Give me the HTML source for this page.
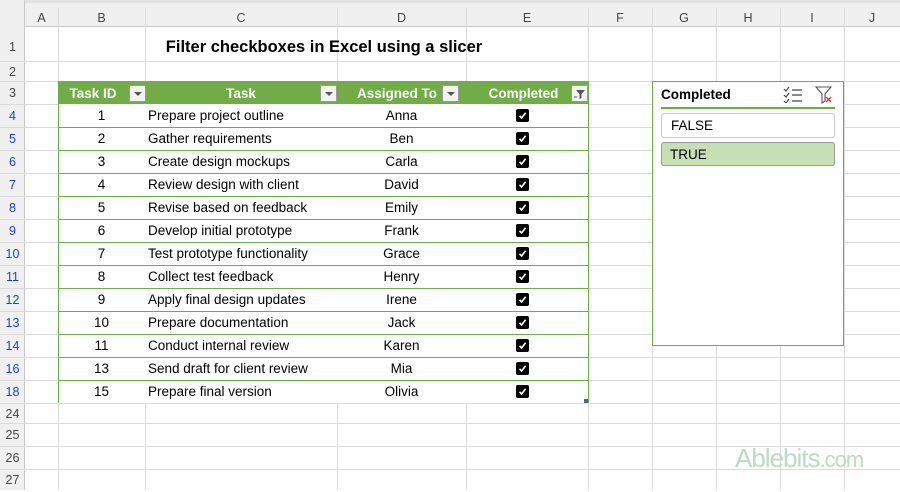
<!DOCTYPE html><html><head><style>
*{margin:0;padding:0;box-sizing:border-box}
body{width:900px;height:490px;background:#fff;position:relative;overflow:hidden;font-family:"Liberation Sans",Calibri,sans-serif;font-size:13.5px;color:#000}
.a{position:absolute}
.vl{position:absolute;width:1px;background:#dadada}
.hl{position:absolute;height:1px;background:#dadada}
.ch{position:absolute;top:8px;height:19px;text-align:center;color:#444;font-size:12.5px;line-height:20px}
.rh{position:absolute;left:0;width:25px;text-align:center;font-size:12.5px;color:#444}
.cell{position:absolute;height:23px;line-height:23px;white-space:nowrap}
.cb{position:absolute;width:13px;height:13px;background:#000;border-radius:2px}
.dd{position:absolute;width:17px;height:17px;background:#f3f3f3;border:1px solid #999;top:85px}
.dd:after{content:"";position:absolute;left:4px;top:6px;border-left:4px solid transparent;border-right:4px solid transparent;border-top:4px solid #555}
</style></head><body>
<div class="a" style="left:0;top:0;width:900px;height:27px;background:#f0f0f0;border-bottom:1px solid #c8c8c8"></div>
<div class="a" style="left:0;top:0;width:900px;height:3px;background:#e2e2e2"></div>
<div class="a" style="left:0;top:0;width:25px;height:490px;background:#f0f0f0;border-right:1px solid #c8c8c8"></div>
<div class="ch" style="left:25px;width:33px">A</div>
<div class="ch" style="left:58px;width:87px">B</div>
<div class="ch" style="left:145px;width:192px">C</div>
<div class="ch" style="left:337px;width:129px">D</div>
<div class="ch" style="left:466px;width:122px">E</div>
<div class="ch" style="left:588px;width:64px">F</div>
<div class="ch" style="left:652px;width:64px">G</div>
<div class="ch" style="left:716px;width:64px">H</div>
<div class="ch" style="left:780px;width:64px">I</div>
<div class="ch" style="left:844px;width:56px">J</div>
<div class="vl" style="left:58px;top:8px;height:482px"></div>
<div class="vl" style="left:145px;top:8px;height:482px"></div>
<div class="vl" style="left:337px;top:8px;height:482px"></div>
<div class="vl" style="left:466px;top:8px;height:482px"></div>
<div class="vl" style="left:588px;top:8px;height:482px"></div>
<div class="vl" style="left:652px;top:8px;height:482px"></div>
<div class="vl" style="left:716px;top:8px;height:482px"></div>
<div class="vl" style="left:780px;top:8px;height:482px"></div>
<div class="vl" style="left:844px;top:8px;height:482px"></div>
<div class="hl" style="left:0;top:61px;width:900px"></div>
<div class="hl" style="left:0;top:81px;width:900px"></div>
<div class="hl" style="left:0;top:104px;width:900px"></div>
<div class="hl" style="left:0;top:127px;width:900px"></div>
<div class="hl" style="left:0;top:150px;width:900px"></div>
<div class="hl" style="left:0;top:173px;width:900px"></div>
<div class="hl" style="left:0;top:196px;width:900px"></div>
<div class="hl" style="left:0;top:219px;width:900px"></div>
<div class="hl" style="left:0;top:242px;width:900px"></div>
<div class="hl" style="left:0;top:265px;width:900px"></div>
<div class="hl" style="left:0;top:288px;width:900px"></div>
<div class="hl" style="left:0;top:311px;width:900px"></div>
<div class="hl" style="left:0;top:334px;width:900px"></div>
<div class="hl" style="left:0;top:357px;width:900px"></div>
<div class="hl" style="left:0;top:380px;width:900px"></div>
<div class="hl" style="left:0;top:403px;width:900px"></div>
<div class="hl" style="left:0;top:423px;width:900px"></div>
<div class="hl" style="left:0;top:446px;width:900px"></div>
<div class="hl" style="left:0;top:469px;width:900px"></div>
<div class="a" style="left:145px;top:38px;width:358px;text-align:center;font-weight:bold;font-size:16.5px">Filter checkboxes in Excel using a slicer</div>
<div class="a" style="left:58px;top:81px;width:531px;height:23px;background:#70ad47"></div>
<div class="a" style="left:58px;top:104px;width:531px;height:299px;background:#fff;border-left:1px solid #70ad47;border-right:1px solid #70ad47"></div>
<div class="a" style="left:58px;top:86px;width:70px;text-align:center;color:#fff;font-weight:bold">Task ID</div>
<div class="a" style="left:145px;top:86px;width:192px;text-align:center;color:#fff;font-weight:bold">Task</div>
<div class="a" style="left:337px;top:86px;width:120px;text-align:center;color:#fff;font-weight:bold">Assigned To</div>
<div class="a" style="left:466px;top:86px;width:115px;text-align:center;color:#fff;font-weight:bold">Completed</div>
<div class="dd" style="left:129px"></div><div class="dd" style="left:320px"></div><div class="dd" style="left:442px"></div>
<div class="a" style="left:571px;top:85px;width:17px;height:17px;background:#f3f3f3;border:1px solid #999"><svg width="15" height="15"><path d="M4 4h9l-3.5 4v4l-2 1v-5z" fill="#555"/><path d="M2 11h3" stroke="#555"/></svg></div>
<div id="rows"></div>
<script>
var d=[[4,1,"Prepare project outline","Anna"],[5,2,"Gather requirements","Ben"],[6,3,"Create design mockups","Carla"],[7,4,"Review design with client","David"],[8,5,"Revise based on feedback","Emily"],[9,6,"Develop initial prototype","Frank"],[10,7,"Test prototype functionality","Grace"],[11,8,"Collect test feedback","Henry"],[12,9,"Apply final design updates","Irene"],[13,10,"Prepare documentation","Jack"],[14,11,"Conduct internal review","Karen"],[16,13,"Send draft for client review","Mia"],[18,15,"Prepare final version","Olivia"]];
var h="";
var lab=[[1,27,34,40],[2,61,20,22],[3,81,23,25]];
lab.forEach(function(l){h+='<div class="rh" style="top:'+l[1]+'px;height:'+l[2]+'px;line-height:'+l[3]+'px">'+l[0]+'</div>'});
d.forEach(function(r,i){var y=104+i*23;
h+='<div class="rh" style="top:'+y+'px;height:23px;line-height:25px;color:#1f3fd6">'+r[0]+'</div>';
if(i>0)h+='<div class="a" style="left:58px;top:'+y+'px;width:531px;height:1px;background:#70ad47"></div>';
h+='<div class="cell" style="left:58px;top:'+y+'px;width:87px;text-align:center">'+r[1]+'</div>';
h+='<div class="cell" style="left:148px;top:'+y+'px">'+r[2]+'</div>';
h+='<div class="cell" style="left:337px;top:'+y+'px;width:129px;text-align:center">'+r[3]+'</div>';
h+='<div class="cb" style="left:516px;top:'+(y+5)+'px"><svg width="13" height="13"><path d="M3.5 6.8 L5.6 9 L9.6 3.8" stroke="#fff" stroke-width="1.6" fill="none"/></svg></div>';});
[[24,403,20],[25,423,23],[26,446,23],[27,469,21]].forEach(function(l){h+='<div class="rh" style="top:'+l[1]+'px;height:'+l[2]+'px;line-height:'+(l[2]+2)+'px">'+l[0]+'</div>'});
document.getElementById("rows").innerHTML=h;
</script>
<div class="a" style="left:584px;top:399px;width:4px;height:4px;background:#4a5fa8"></div>
<div class="a" style="left:652px;top:81px;width:192px;height:265px;background:#fff;border:1px solid #70ad47"></div>
<div class="a" style="left:661px;top:87px;font-weight:bold;font-size:13.5px">Completed</div>
<svg class="a" style="left:783px;top:86px" width="20" height="17"><g stroke="#444" stroke-width="1.2" fill="none"><path d="M1 3l2 2 3-4M1 9l2 2 3-4M1 15l2 2 3-4"/><path d="M9 4h10M9 9h10M9 15h10"/></g></svg>
<svg class="a" style="left:815px;top:86px" width="18" height="18"><path d="M1 1h15l-6 7v7l-3 2v-9z" stroke="#555" stroke-width="1.1" fill="none"/><path d="M11 11l5 5M16 11l-5 5" stroke="#e03030" stroke-width="1.3"/></svg>
<div class="a" style="left:661px;top:107px;width:174px;height:2px;background:#70ad47"></div>
<div class="a" style="left:661px;top:113px;width:174px;height:25px;border:1px solid #ccc;border-radius:3px;padding-left:9px;line-height:23px">FALSE</div>
<div class="a" style="left:661px;top:142px;width:174px;height:24px;border:1px solid #999;border-radius:3px;background:#c6e0b4;padding-left:8px;line-height:23px">TRUE</div>
<div class="a" style="left:735px;top:443px;font-size:26px;color:#b8dcc6;letter-spacing:-1px">Ablebits<span style="font-size:22px">.com</span></div>
</body></html>
